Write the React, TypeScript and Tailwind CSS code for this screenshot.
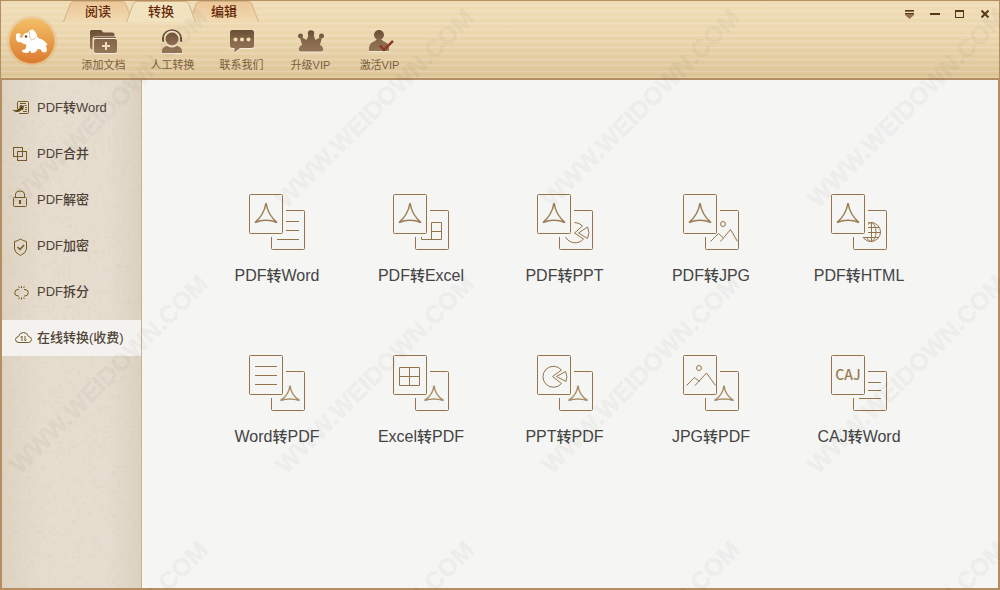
import { useState, type ReactNode } from "react";
import clsx from "clsx";

const TABS = ["阅读", "转换", "编辑"];

const INK = "url(#ink)";
const CREAM = "#f0dfba";

const TOOLS: { label: string; icon: ReactNode }[] = [
  {
    label: "添加文档",
    icon: (
      <>
        <path
          d="M1.5 1H11l2.5 2.500H22q2.500 0 2.500 2v2H5q-2.500 0-2.500 2.500V21Q0 20 0 18V2.500Q0 1 1.500 1Z"
          fill={INK}
        />
        <rect x="4" y="10" width="23" height="14" rx="2" fill={INK} />
        <path d="M4 8.500h22" stroke={INK} />
        <path d="M16 13v8M12 17h8" stroke={CREAM} strokeWidth="2" />
      </>
    ),
  },
  {
    label: "人工转换",
    icon: (
      <>
        <circle cx="13" cy="10" r="6.500" fill={INK} />
        <path
          d="M4 12V9a9 8 0 0 1 18 0v3"
          fill="none"
          stroke="#6b4e35"
          strokeWidth="1.500"
        />
        <path d="M3 8h2v5H3.500zM21 8h2v5h-1.500z" fill="#6b4e35" />
        <path d="M3 24v-2q0-4 5-5 5 3 10 0 5 1 5 5v2Z" fill={INK} />
      </>
    ),
  },
  {
    label: "联系我们",
    icon: (
      <>
        <path
          d="M4.500 1h19q2.500 0 2.500 2.500v13q0 2.500-2.500 2.500H12l-5.500 4.500V19h-2Q2 19 2 16.500v-13Q2 1 4.500 1Z"
          fill={INK}
        />
        <circle cx="7.500" cy="10.500" r="2" fill={CREAM} />
        <circle cx="14" cy="10.500" r="2" fill={CREAM} />
        <circle cx="20.500" cy="10.500" r="2" fill={CREAM} />
      </>
    ),
  },
  {
    label: "升级VIP",
    icon: (
      <>
        <path
          d="M2.500 7l7 4 2.500-6h4l2.500 6 7-4-2.500 9q4 2 3 5.500-.5 1-2 1H4q-1.500 0-2-1Q1 18 5 16Z"
          fill={INK}
        />
        <circle cx="14" cy="4.500" r="3.200" fill={INK} />
        <circle cx="3.500" cy="7" r="2.500" fill={INK} />
        <circle cx="24.500" cy="7" r="2.500" fill={INK} />
      </>
    ),
  },
  {
    label: "激活VIP",
    icon: (
      <>
        <circle cx="13" cy="6" r="5" fill={INK} />
        <path d="M3 22v-3q0-5 6-7l2-2h4l2 2q6 2 6 7v3Z" fill={INK} />
        <path
          d="M14 16.500l4 4.500 9-9"
          fill="none"
          stroke="#8c3a22"
          strokeWidth="2.500"
        />
      </>
    ),
  },
];

const MENU: { label: string; icon: ReactNode }[] = [
  {
    label: "PDF转Word",
    icon: (
      <>
        <path d="M5.500 11V4.500q0-1 1-1h9q1 0 1 1v10q0 1-1 1H7" />
        <path d="M8 5.500h6M8 7.500h2M12.500 7.500h2M13 9.500h2M13 11.500h2M11 13.500h4" />
        <path
          d="M0 11.500q5 2 8-2l-1-1 5-1-1 5-1-1Q5 16.500 0 11.500Z"
          fill="#5f4512"
          stroke="none"
        />
      </>
    ),
  },
  {
    label: "PDF合并",
    icon: (
      <>
        <rect x="1.500" y="3.500" width="9" height="9" />
        <rect x="5.500" y="7.500" width="9" height="9" />
      </>
    ),
  },
  {
    label: "PDF解密",
    icon: (
      <>
        <rect x="1.500" y="7.500" width="13" height="9" rx="1" />
        <path d="M3.500 7.500V5q0-4 4.500-4t4.500 4v2.500" />
        <path d="M8 10v4" strokeWidth="2" />
      </>
    ),
  },
  {
    label: "PDF加密",
    icon: (
      <>
        <path d="M8.500 3Q11 5 14.500 5.500V13q0 3.500-6 6.500-6-3-6-6.500V5.500Q6 5 8.500 3Z" />
        <path d="M5.500 11l2.500 2.500 4-4.500" strokeWidth="1.500" />
      </>
    ),
  },
  {
    label: "PDF拆分",
    icon: (
      <>
        <path d="M7 7.500H6a3.200 3.200 0 0 0 0 6.500h1M12 7.500h1a3.200 3.200 0 0 1 0 6.500h-1" />
        <path d="M9.500 4v2M6.500 4.500l1 1.500M12.500 4.500l-1 1.500M9.500 15.500v2M6.500 17l1-1.500M12.500 17l-1-1.500" />
      </>
    ),
  },
  {
    label: "在线转换(收费)",
    icon: (
      <>
        <path d="M7 14.500q-3.500 0-3.500-3 0-2.500 3-3Q7.500 4.500 11.500 4.500t5 4q3 .5 3 3t-3 3Z" />
        <path d="M10 13V8L8.500 9.500M13 8v5l1.500-1.500" />
      </>
    ),
  },
];

function PdfMark({ small = false }: { small?: boolean }) {
  return small ? (
    <path
      d="M41 30.500Q40 40 31.500 45.500 41 42.500 50.500 45.500 42 40 41 30.500Z"
      stroke="#a88f68"
      strokeWidth="1.500"
    />
  ) : (
    <path
      d="M17 9Q15 21 6 28.500 17 24 28 28.500 19 21 17 9Z"
      stroke="#9a7d52"
      strokeWidth="1.500"
    />
  );
}

const FORMATS: { from: string; to: string; art: ReactNode }[] = [
  {
    from: "PDF",
    to: "Word",
    art: (
      <>
        <PdfMark />
        <path d="M37 27.500h13M37 36.500h13M28 45.500h22" />
      </>
    ),
  },
  {
    from: "PDF",
    to: "Excel",
    art: (
      <>
        <PdfMark />
        <path d="M38.500 45.500v-17h10v17h-20V43M38.500 37.500h10" />
      </>
    ),
  },
  {
    from: "PDF",
    to: "PPT",
    art: (
      <>
        <PdfMark />
        <path d="M37.500 28.500q5 0 8 3.500l-8 7 9 6a11 11 0 0 1-18-2" />
        <path d="M41.500 39l9-6q3 5.500 0 11.500Z" />
      </>
    ),
  },
  {
    from: "PDF",
    to: "JPG",
    art: (
      <>
        <PdfMark />
        <circle cx="40" cy="30" r="2.500" />
        <path d="M27.500 47.500l8-8 4.500 4M37.500 47.500l10-12 7 12" />
      </>
    ),
  },
  {
    from: "PDF",
    to: "HTML",
    art: (
      <>
        <PdfMark />
        <clipPath id="globe">
          <path d="M37 20h18v34H28V43h9Z" />
        </clipPath>
        <g clipPath="url(#globe)">
          <circle cx="40" cy="38" r="9.500" />
          <ellipse cx="40" cy="38" rx="5" ry="9.500" />
          <path d="M40.500 28v20M30 38.500h20M32 33.500h16M32 43.500h16" />
        </g>
      </>
    ),
  },
  {
    from: "Word",
    to: "PDF",
    art: (
      <>
        <path d="M6 11.500h22M6 20.500h22M6 29.500h22" />
        <PdfMark small />
      </>
    ),
  },
  {
    from: "Excel",
    to: "PDF",
    art: (
      <>
        <path d="M6.500 12.500h20v18h-20zM16.500 12.500v18M6.500 21.500h20" />
        <PdfMark small />
      </>
    ),
  },
  {
    from: "PPT",
    to: "PDF",
    art: (
      <>
        <path d="M24.500 15a10.500 10.500 0 1 0 0 13.500l-9-7Z" />
        <path d="M19.500 21.500l9-5q2.500 5 .5 10Z" />
        <PdfMark small />
      </>
    ),
  },
  {
    from: "JPG",
    to: "PDF",
    art: (
      <>
        <circle cx="16" cy="13" r="2.500" />
        <path d="M3.500 30.500l8-8 5 4M12 30.500l11.500-12.500 9 12.500" />
        <PdfMark small />
      </>
    ),
  },
  {
    from: "CAJ",
    to: "Word",
    art: (
      <>
        <text
          x="17"
          y="25"
          textAnchor="middle"
          className="fill-[#9a7d52] stroke-none font-['Noto_Sans_CJK_SC',sans-serif] text-[14px] font-medium"
        >
          CAJ
        </text>
        <path d="M37 27.500h13M37 35.500h13M28 43.500h22" />
      </>
    ),
  },
];

function Logo() {
  return (
    <svg viewBox="0 0 56 56" className="size-14" aria-hidden="true">
      <circle cx="28" cy="29" r="25" fill="#e89a4c" opacity="0.25" />
      <circle cx="28" cy="29" r="22.500" fill="url(#sun)" />
      <path
        d="M12 22l3-1 2 2-1.500 1.500q1 2 3 .5l1-2.500q2-2 5-2 1-3 4-3 4 2 5 8 2 1.500 4 1.500l4 3 2 2.500-1.500 1 1 5-1.500 2-3.500-.5-1-2.500-3-.5-3 3.500-4 .5-.5-2.500-3 2.500-4.500-.5-1.500-2 4-1.500 1-4-2-1q-2.500 0-3.500-2-4 1-5-3Z"
        fill="#fff"
      />
      <path
        d="M25.500 20q-1 6 2 8 2.500 0 4.500-2.500"
        fill="none"
        stroke="#e2c7a0"
      />
      <circle cx="22" cy="24.500" r="1.200" fill="#6b4020" />
    </svg>
  );
}

function Tabs() {
  const [active, setActive] = useState(1);
  return (
    <div role="tablist" className="flex">
      {TABS.map((tab, i) => (
        <button
          key={tab}
          type="button"
          role="tab"
          aria-selected={i === active}
          onClick={() => setActive(i)}
          className={clsx(
            "relative h-[21px] w-[70px] text-[13px] leading-[21px] font-medium text-[#662808] not-first:-ml-[7px]",
            i === active && "z-10",
          )}
        >
          <svg
            viewBox="0 0 70 21"
            className="absolute inset-0"
            aria-hidden="true"
          >
            <path
              d="M.5 21 7 3.500Q8 .5 11 .5h48q3 0 4 3L69.500 21"
              fill={i === active ? "#f2e3c0" : "url(#tab)"}
              stroke="#d3b284"
            />
          </svg>
          <span className="relative">{tab}</span>
        </button>
      ))}
    </div>
  );
}

function WindowControls() {
  const style =
    "flex h-5 w-[25px] items-center justify-center text-[#573819] hover:bg-black/5";
  return (
    <div className="mt-[3px] mr-0.5 ml-auto flex">
      <button type="button" aria-label="菜单" className={style}>
        <svg viewBox="0 0 9 9" className="size-[9px]" fill="currentColor">
          <path d="M0 0h9v1H0zM0 3h9v1H0z" />
          <path d="M0 1h9v1H0zM0 4h9v1L4.500 9 0 5Z" fill="#94704f" />
        </svg>
      </button>
      <button type="button" aria-label="最小化" className={style}>
        <span className="h-0.5 w-2.5 bg-current" />
      </button>
      <button type="button" aria-label="最大化" className={style}>
        <span className="h-2 w-[9px] border border-t-2 border-current" />
      </button>
      <button type="button" aria-label="关闭" className={style}>
        <svg
          viewBox="0 0 8 8"
          className="size-2"
          stroke="currentColor"
          strokeWidth="2"
        >
          <path d="M.5.5l7 7M7.500.5l-7 7" />
        </svg>
      </button>
    </div>
  );
}

function Header() {
  return (
    <header className="flex border border-b-2 border-[#b48d60] bg-[repeating-linear-gradient(#ffffff00_0_3px,#ffffff2b_4px_5px,#ffffff00_6px),linear-gradient(#efdcb5,#ecd7ae_40%,#dcc496)]">
      <div className="flex w-[62px] items-center pl-[3px]">
        <Logo />
      </div>
      <div>
        <Tabs />
        <div className="flex pt-[7px] pb-1.5 pl-1.5">
          {TOOLS.map(({ label, icon }) => (
            <button
              key={label}
              type="button"
              className="flex w-[69px] flex-col items-center gap-[5px] text-[11px] leading-[14px] text-[#7a5d41]"
            >
              <svg
                viewBox="0 0 28 24"
                className="h-6 w-7 drop-shadow-[0_1px_0_#fff8]"
                aria-hidden="true"
              >
                {icon}
              </svg>
              {label}
            </button>
          ))}
        </div>
      </div>
      <WindowControls />
    </header>
  );
}

function Sidebar() {
  const [selected, setSelected] = useState(5);
  return (
    <nav className="relative w-[140px] shrink-0 border-r border-[#c9b583] bg-[linear-gradient(90deg,#dfd3c2,#e6ddcf_30%,#e6ddd0_75%,#ddd2c1)]">
      <svg
        className="absolute inset-0 size-full opacity-15"
        aria-hidden="true"
      >
        <filter id="paper">
          <feTurbulence baseFrequency="0.2" numOctaves="4" />
          <feColorMatrix values="0 0 0 0 .5  0 0 0 0 .42  0 0 0 0 .3  1.500 0 0 0 -.4" />
        </filter>
        <rect width="100%" height="100%" filter="url(#paper)" />
      </svg>
      <ul className="relative flex flex-col gap-2.5 pt-2.5">
        {MENU.map(({ label, icon }, i) => (
          <li key={label}>
            <button
              type="button"
              onClick={() => setSelected(i)}
              className={clsx(
                "flex h-9 w-full items-center gap-[5px] pl-2.5 text-[13px] font-medium whitespace-nowrap text-[#4f4236]",
                i === selected && "bg-[#f3f2ef]",
              )}
            >
              <svg
                viewBox="0 0 20 20"
                className="size-5 shrink-0"
                fill="none"
                stroke="#745a24"
                aria-hidden="true"
              >
                {icon}
              </svg>
              {label}
            </button>
          </li>
        ))}
      </ul>
    </nav>
  );
}

function Converters() {
  return (
    <main className="grid flex-1 grid-cols-[144fr_144fr_143fr_150fr_146fr] content-start gap-y-[69px] bg-[#f5f5f3] pt-[114px] pr-[66px] pb-8 pl-[63px]">
      {FORMATS.map(({ from, to, art }) => (
        <button
          key={from + to}
          type="button"
          className="flex flex-col items-center gap-4 leading-5 font-medium text-[#444]"
        >
          <svg
            viewBox="0 0 56 56"
            className="size-14"
            fill="none"
            stroke="#95744c"
            aria-hidden="true"
          >
            <rect x="0.500" y="0.500" width="33" height="39" rx="1" />
            <path d="M37 16.500h17.500q1 0 1 1v37q0 1-1 1h-31q-1 0-1-1V43" />
            {art}
          </svg>
          <span>
            {from}
            <span className="text-[15px]">转</span>
            {to}
          </span>
        </button>
      ))}
    </main>
  );
}

function Watermark() {
  const step = 266;
  return (
    <svg
      className="pointer-events-none absolute inset-0 z-20 size-full"
      aria-hidden="true"
    >
      {[0, 1, 2, 3].map((row) =>
        [0, 1, 2, 3].map((col) => (
          <text
            key={`${row}-${col}`}
            transform={`translate(${20 + col * step} ${209 + row * step}) rotate(-45)`}
            className="fill-black/3 stroke-black/4 text-[25px] font-bold"
          >
            WWW.WEIDOWN.COM
          </text>
        )),
      )}
    </svg>
  );
}

export default function App() {
  return (
    <div className="relative flex min-h-screen flex-col overflow-hidden font-['Liberation_Sans','Noto_Sans_CJK_SC',sans-serif]">
      <svg className="absolute size-0" aria-hidden="true">
        <defs>
          <linearGradient
            id="ink"
            gradientUnits="userSpaceOnUse"
            x1="0"
            y1="0"
            x2="0"
            y2="24"
          >
            <stop stopColor="#654a33" />
            <stop offset="0.500" stopColor="#87684b" />
            <stop offset="1" stopColor="#96765a" />
          </linearGradient>
          <linearGradient id="sun" x2="0" y2="1">
            <stop stopColor="#f3c067" />
            <stop offset="1" stopColor="#dc7a2f" />
          </linearGradient>
          <linearGradient id="tab" x2="0" y2="1">
            <stop stopColor="#edc698" />
            <stop offset="1" stopColor="#f0dab2" />
          </linearGradient>
        </defs>
      </svg>
      <Header />
      <div className="flex flex-1 border-x-2 border-b-2 border-[#b48d60]">
        <Sidebar />
        <Converters />
      </div>
      <Watermark />
    </div>
  );
}
